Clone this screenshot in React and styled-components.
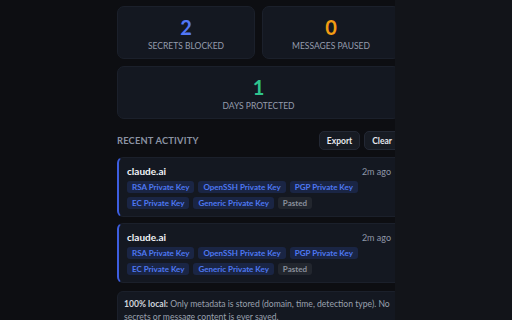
import React from "react";
import styled, { createGlobalStyle } from "styled-components";

const Global = createGlobalStyle`
  html, body { margin: 0; padding: 0; background: #121419; }
  body { font-family: "Lato", "Noto Sans", sans-serif; width: 512px; height: 320px; overflow: hidden; }
`;

const Page = styled.div`
  display: flex;
  height: 320px;
`;

const Panel = styled.div`
  width: 395px;
  height: 320px;
  background: #0d0e12;
  overflow: hidden;
  flex-shrink: 0;
`;

const Inner = styled.div`
  margin-left: 117px;
  width: 283px;
  padding-top: 6px;
  display: flex;
  flex-direction: column;
`;

const StatGrid = styled.div`
  display: grid;
  grid-template-columns: 1fr 1fr;
  gap: 7px;
`;

const StatCard = styled.div`
  grid-column: ${(p) => (p.$wide ? "1 / span 2" : "auto")};
  height: 53px;
  box-sizing: border-box;
  background: #141821;
  border: 1px solid #1b202b;
  border-radius: 7px;
  display: flex;
  flex-direction: column;
  align-items: center;
  justify-content: center;
  gap: 2px;
  padding-top: 2px;
`;

const StatNum = styled.div`
  font-size: 20px;
  font-weight: 700;
  line-height: 22px;
  color: ${(p) => p.$color};
`;

const StatLabel = styled.div`
  font-size: 8.5px;
  line-height: 12px;
  color: #959cad;
  text-transform: uppercase;
`;

const SectionHead = styled.div`
  display: flex;
  align-items: center;
  justify-content: space-between;
  margin-top: 12px;
  height: 19px;
`;

const SectionTitle = styled.div`
  font-size: 9.3px;
  font-weight: 700;
  letter-spacing: 0.2px;
  color: #8b93a3;
`;

const Buttons = styled.div`
  display: flex;
  gap: 4px;
`;

const Btn = styled.button`
  height: 19px;
  padding: 0 7px;
  background: #171b23;
  border: 1px solid #232834;
  border-radius: 5px;
  color: #e6e8ee;
  font-family: inherit;
  font-size: 8.5px;
  font-weight: 700;
`;

const List = styled.div`
  display: flex;
  flex-direction: column;
  gap: 6px;
  margin-top: 7px;
`;

const ActCard = styled.div`
  box-sizing: border-box;
  height: 60px;
  background: #141821;
  border: 1px solid #1b202b;
  border-left: 2px solid #3d5ee0;
  border-radius: 6px;
  padding: 7px 8px 0 8px;
`;

const ActHead = styled.div`
  display: flex;
  justify-content: space-between;
  align-items: baseline;
`;

const Domain = styled.div`
  font-size: 10px;
  font-weight: 700;
  color: #f1f3f7;
  line-height: 13px;
`;

const Time = styled.div`
  font-size: 9px;
  color: #8f97a8;
`;

const Tags = styled.div`
  display: flex;
  flex-wrap: wrap;
  gap: 4px 4px;
  margin-top: 3px;
`;

const Tag = styled.span`
  font-size: 8px;
  font-weight: 700;
  line-height: 12px;
  padding: 0 5px;
  border-radius: 3px;
  background: ${(p) => (p.$muted ? "#22262e" : "#1a2544")};
  color: ${(p) => (p.$muted ? "#8a909c" : "#4e78f2")};
`;

const Info = styled.div`
  margin-top: 8px;
  background: #141821;
  border: 1px solid #1b202b;
  border-radius: 6px;
  padding: 6px 2px 8px 6px;
  font-size: 8.6px;
  line-height: 13px;
  color: #9aa1ae;
  width: 283px;
  box-sizing: border-box;
`;

const Strong = styled.b`
  color: #cfd3db;
  font-weight: 700;
`;

const Outside = styled.div`
  flex: 1;
  background: #121419;
`;

const keys = ["RSA Private Key", "OpenSSH Private Key", "PGP Private Key", "EC Private Key", "Generic Private Key"];

function Activity() {
  return (
    <ActCard>
      <ActHead>
        <Domain>claude.ai</Domain>
        <Time>2m ago</Time>
      </ActHead>
      <Tags>
        {keys.map((k) => (
          <Tag key={k}>{k}</Tag>
        ))}
        <Tag $muted>Pasted</Tag>
      </Tags>
    </ActCard>
  );
}

export default function App() {
  return (
    <>
      <Global />
      <Page>
        <Panel>
          <Inner>
            <StatGrid>
              <StatCard>
                <StatNum $color="#5277f6">2</StatNum>
                <StatLabel>Secrets Blocked</StatLabel>
              </StatCard>
              <StatCard>
                <StatNum $color="#f39c12">0</StatNum>
                <StatLabel>Messages Paused</StatLabel>
              </StatCard>
              <StatCard $wide>
                <StatNum $color="#2fc48d">1</StatNum>
                <StatLabel>Days Protected</StatLabel>
              </StatCard>
            </StatGrid>
            <SectionHead>
              <SectionTitle>RECENT ACTIVITY</SectionTitle>
              <Buttons>
                <Btn>Export</Btn>
                <Btn>Clear</Btn>
              </Buttons>
            </SectionHead>
            <List>
              <Activity />
              <Activity />
            </List>
            <Info>
              <Strong>100% local:</Strong> Only metadata is stored (domain, time, detection type). No secrets or message content is ever saved.
            </Info>
          </Inner>
        </Panel>
        <Outside />
      </Page>
    </>
  );
}
